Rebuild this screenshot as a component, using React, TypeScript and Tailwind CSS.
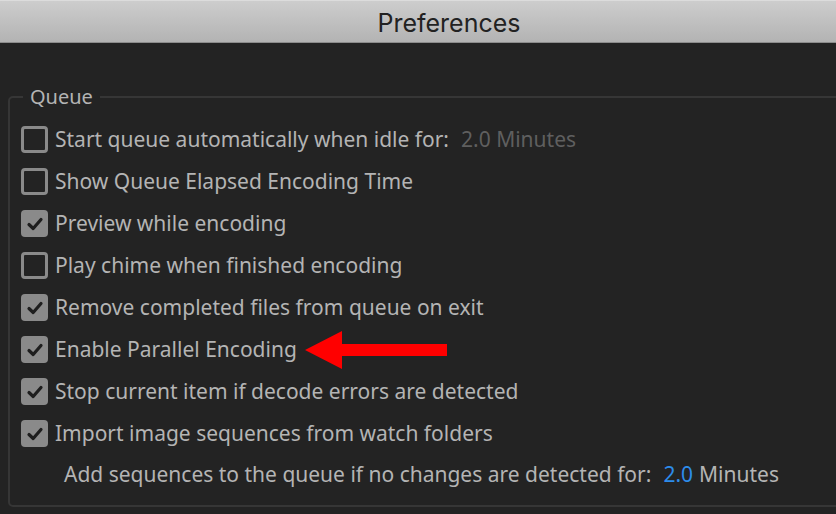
import React from "react";

const rows = [
  { label: "Start queue automatically when idle for:", checked: false, extra: true },
  { label: "Show Queue Elapsed Encoding Time", checked: false },
  { label: "Preview while encoding", checked: true },
  { label: "Play chime when finished encoding", checked: false },
  { label: "Remove completed files from queue on exit", checked: true },
  { label: "Enable Parallel Encoding", checked: true, arrow: true },
  { label: "Stop current item if decode errors are detected", checked: true },
  { label: "Import image sequences from watch folders", checked: true },
];

function Checkbox({ checked }: { checked: boolean }) {
  if (checked) {
    return (
      <span className="w-[27px] h-[27px] shrink-0 rounded-[4px] bg-[#8a8a8a] flex items-center justify-center">
        <svg width="18" height="16" viewBox="0 0 18 16">
          <path d="M3 8.5 L7.2 12.5 L15 3.5" stroke="#1e1e1e" strokeWidth="3.2" fill="none" strokeLinecap="round" strokeLinejoin="round" />
        </svg>
      </span>
    );
  }
  return <span className="w-[27px] h-[27px] shrink-0 rounded-[4px] border-[3px] border-[#8a8a8a]" />;
}

function Arrow() {
  return (
    <svg width="144" height="40" viewBox="0 0 144 40" className="ml-[8px]">
      <polygon points="0,20 37,1 37,14 142,14 142,26 37,26 37,39" fill="#ff0000" />
    </svg>
  );
}

export default function App() {
  return (
    <div className="w-[836px] h-[514px] overflow-hidden bg-[#232323] font-['Noto_Sans',sans-serif]">
      <div className="h-[43px] bg-gradient-to-b from-[#cdcdcd] to-[#b3b3b3] border-t border-[#dcdcdc] border-b border-b-[#8c8c8c] flex items-center justify-center">
        <span className="text-[25px] leading-[30px] text-[#222222] font-['Inter',sans-serif] pl-[62px] pt-[2px]">Preferences</span>
      </div>
      <fieldset className="ml-[8px] mt-[42px] w-[860px] h-[422px] border-2 border-[#363636] rounded-[5px] pl-[11px] pt-[17px]">
        <legend className="ml-[2px] px-[7px] text-[20px] leading-[24px] text-[#b4b4b4]">Queue</legend>
        <div className="flex flex-col gap-[15px]">
          {rows.map((r) => (
            <div key={r.label} className="flex items-center h-[27px]">
              <Checkbox checked={r.checked} />
              <span className="ml-[7px] text-[21px] text-[#b4b4b4] whitespace-nowrap">{r.label}</span>
              {r.extra && (
                <span className="ml-[12px] text-[21px] text-[#5f5f5f] whitespace-nowrap">2.0 Minutes</span>
              )}
              {r.arrow && <Arrow />}
            </div>
          ))}
        </div>
        <div className="mt-[12px] pl-[43px] flex items-center text-[21px] text-[#b4b4b4] whitespace-nowrap">
          <span>Add sequences to the queue if no changes are detected for:</span>
          <span className="ml-[12px] text-[#2d8ceb]">2.0</span>
          <span className="ml-[6px]">Minutes</span>
        </div>
      </fieldset>
    </div>
  );
}
